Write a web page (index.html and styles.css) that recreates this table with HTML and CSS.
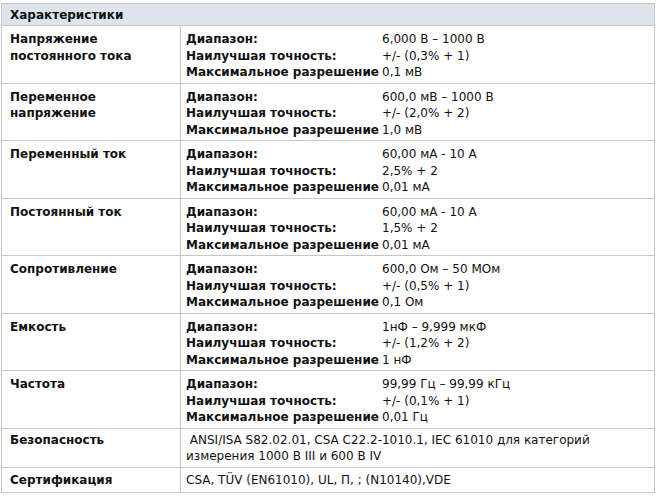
FILE: index.html
```html
<!DOCTYPE html>
<html lang="ru">
<head>
<meta charset="utf-8">
<title>Характеристики</title>
<link rel="stylesheet" href="styles.css">
</head>
<body>
<table class="specs">
  <colgroup><col class="c1"><col class="c2"></colgroup>
  <thead>
    <tr><th colspan="2" class="head">Характеристики</th></tr>
  </thead>
  <tbody>
    <tr>
      <td class="name">Напряжение постоянного тока</td>
      <td class="vals"><div class="grid">
        <span class="lbl">Диапазон:</span><span>6,000 В – 1000 В</span>
        <span class="lbl">Наилучшая точность:</span><span>+/- (0,3% + 1)</span>
        <span class="lbl">Максимальное разрешение</span><span>0,1 мВ</span>
      </div></td>
    </tr>
    <tr>
      <td class="name">Переменное напряжение</td>
      <td class="vals"><div class="grid">
        <span class="lbl">Диапазон:</span><span>600,0 мВ – 1000 В</span>
        <span class="lbl">Наилучшая точность:</span><span>+/- (2,0% + 2)</span>
        <span class="lbl">Максимальное разрешение</span><span>1,0 мВ</span>
      </div></td>
    </tr>
    <tr>
      <td class="name">Переменный ток</td>
      <td class="vals"><div class="grid">
        <span class="lbl">Диапазон:</span><span>60,00 мА - 10 А</span>
        <span class="lbl">Наилучшая точность:</span><span>2,5% + 2</span>
        <span class="lbl">Максимальное разрешение</span><span>0,01 мА</span>
      </div></td>
    </tr>
    <tr>
      <td class="name">Постоянный ток</td>
      <td class="vals"><div class="grid">
        <span class="lbl">Диапазон:</span><span>60,00 мА - 10 А</span>
        <span class="lbl">Наилучшая точность:</span><span>1,5% + 2</span>
        <span class="lbl">Максимальное разрешение</span><span>0,01 мА</span>
      </div></td>
    </tr>
    <tr>
      <td class="name">Сопротивление</td>
      <td class="vals"><div class="grid">
        <span class="lbl">Диапазон:</span><span>600,0 Ом – 50 МОм</span>
        <span class="lbl">Наилучшая точность:</span><span>+/- (0,5% + 1)</span>
        <span class="lbl">Максимальное разрешение</span><span>0,1 Ом</span>
      </div></td>
    </tr>
    <tr>
      <td class="name">Емкость</td>
      <td class="vals"><div class="grid">
        <span class="lbl">Диапазон:</span><span>1нФ – 9,999 мкФ</span>
        <span class="lbl">Наилучшая точность:</span><span>+/- (1,2% + 2)</span>
        <span class="lbl">Максимальное разрешение</span><span>1 нФ</span>
      </div></td>
    </tr>
    <tr>
      <td class="name">Частота</td>
      <td class="vals"><div class="grid">
        <span class="lbl">Диапазон:</span><span>99,99 Гц – 99,99 кГц</span>
        <span class="lbl">Наилучшая точность:</span><span>+/- (0,1% + 1)</span>
        <span class="lbl">Максимальное разрешение</span><span>0,01 Гц</span>
      </div></td>
    </tr>
    <tr>
      <td class="name short">Безопасность</td>
      <td class="vals short">&nbsp;ANSI/ISA S82.02.01, CSA C22.2-1010.1, IEC 61010 для категорий измерения 1000 В III и 600 В IV</td>
    </tr>
    <tr>
      <td class="name cert">Сертификация</td>
      <td class="vals cert">CSA, TÜV (EN61010), UL, П, ; (N10140),VDE</td>
    </tr>
  </tbody>
</table>
</body>
</html>
```
FILE: styles.css
```css
html, body {
  margin: 0;
  padding: 0;
  background: #ffffff;
}
body {
  padding: 3px 0 0 1px;
  font-family: "DejaVu Sans", Verdana, sans-serif;
  font-size: 12px;
  color: #111;
}
.specs {
  width: 654px;
  border-collapse: collapse;
  table-layout: fixed;
}
.c1 {
  width: 179px;
}
.specs th, .specs td {
  border: 1px solid #c6c6c6;
  vertical-align: top;
  text-align: left;
}
.head {
  background: #dde4ec;
  font-weight: bold;
  padding: 4px 8px 3px;
  line-height: 14px;
}
.name {
  font-weight: bold;
  padding: 5px 6px 2px 8px;
  line-height: 16.5px;
}
.vals {
  padding: 5px 6px 2px 5px;
  line-height: 16.5px;
}
.grid {
  display: grid;
  grid-template-columns: 196px 1fr;
}
.lbl {
  font-weight: bold;
}
.specs .short {
  padding-top: 3px;
  padding-bottom: 2px;
}
.specs .cert {
  padding-top: 4px;
  padding-bottom: 4px;
}
```
